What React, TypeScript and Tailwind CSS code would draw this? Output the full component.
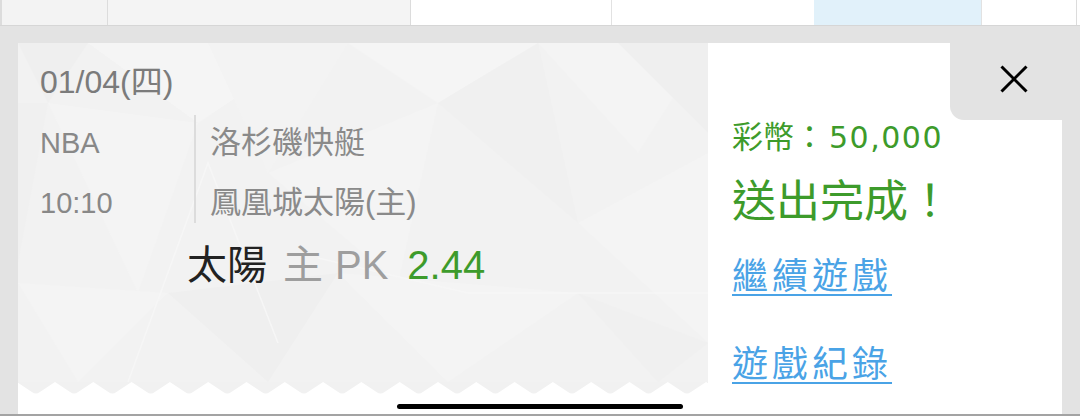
import React from "react";

function Texture() {
  return (
    <svg className="absolute inset-0 h-full w-full" viewBox="0 0 690 339" preserveAspectRatio="none">
      <rect width="690" height="339" fill="#f2f2f2" />
      <polygon points="0,0 70,0 30,60" fill="#efefef" />
      <polygon points="70,0 300,0 180,80" fill="#f5f5f5" />
      <polygon points="190,0 330,0 250,130" fill="#f3f3f3" />
      <polygon points="330,0 520,0 420,60" fill="#f5f5f5" />
      <polygon points="420,60 520,0 560,180" fill="#f0f0f0" />
      <polygon points="520,0 690,0 620,110" fill="#f4f4f4" />
      <polygon points="600,0 690,0 690,90" fill="#efefef" />
      <polygon points="0,60 30,60 0,220" fill="#f0f0f0" />
      <polygon points="30,60 180,80 120,250" fill="#f4f4f4" />
      <polygon points="250,130 420,60 380,240" fill="#f4f4f4" />
      <polygon points="560,180 690,110 690,300" fill="#f4f4f4" />
      <polygon points="0,240 150,250 60,339" fill="#f4f4f4" />
      <polygon points="150,250 320,230 250,339" fill="#efefef" />
      <polygon points="320,230 560,250 430,339" fill="#f4f4f4" />
      <polygon points="560,250 690,300 640,339" fill="#f0f0f0" />
      <polyline points="110,339 190,120 260,300" fill="none" stroke="#f6f6f6" strokeWidth="1.5" />
      <polyline points="300,215 450,250 700,250" fill="none" stroke="#f6f6f6" strokeWidth="1.5" />
    </svg>
  );
}

function Zigzag() {
  const P = 38.3;
  const parts: string[] = [];
  for (let k = -2; k < 19; k++) {
    const p = 37 + k * P;
    const v = p + P / 2;
    parts.push(
      `M${p.toFixed(1)},0 L${(v - 4).toFixed(1)},10 Q${v.toFixed(1)},13 ${(v + 4).toFixed(1)},10 L${(p + P).toFixed(1)},0 Z`
    );
  }
  return (
    <svg className="block h-[12px] w-[690px]" viewBox="0 0 690 12">
      <rect width="690" height="12" fill="#ffffff" />
      <path d={parts.join(" ")} fill="#f1f1f1" />
    </svg>
  );
}

export default function App() {
  return (
    <div className="relative h-[416px] w-[1080px] overflow-hidden bg-[#e3e3e3] font-['Liberation_Sans','Noto_Sans_CJK_TC',sans-serif]">
      {/* table strip behind the overlay */}
      <div className="flex h-[26px] border-b border-[#d6d6d6] bg-white">
        <div className="w-[108px] border-r border-l-2 border-[#dcdcdc] bg-[#f3f3f3]" />
        <div className="w-[303px] border-r border-[#dcdcdc] bg-[#f4f4f4]" />
        <div className="w-[201px] border-r border-[#e2e2e2]" />
        <div className="w-[202px]" />
        <div className="w-[168px] border-r border-[#e2e2e2] bg-[#e1f1fa]" />
        <div className="w-[95px] border-r border-[#dcdcdc]" />
      </div>

      {/* overlay area */}
      <div className="flex h-[388px] px-[18px] pt-[17px]">
        <div className="flex flex-1">
          {/* ticket */}
          <div className="flex w-[690px] flex-col bg-white">
            <div className="relative flex-1">
              <Texture />
              <div className="relative pl-[22px] pt-[19px]">
                <div className="text-[32px] leading-[40px] text-[#7b7b7b]">01/04(四)</div>
                <div className="mt-[13px] flex">
                  <div className="w-[154px] pt-[8px] text-[29px] leading-[40px] text-[#888888]">
                    <div>NBA</div>
                    <div className="mt-[20px]">10:10</div>
                  </div>
                  <div className="h-[108px] w-[2px] bg-[#dcdcdc]" />
                  <div className="pl-[14px] pt-[8px] text-[31px] leading-[40px] text-[#8a8a8a]">
                    <div>洛杉磯快艇</div>
                    <div className="mt-[20px]">鳳凰城太陽(主)</div>
                  </div>
                </div>
                <div className="mt-[18px] flex pl-[147px] text-[40px] leading-[48px]">
                  <span className="text-[#222222]">太陽</span>
                  <span className="ml-[16px] text-[#9e9e9e]">主</span>
                  <span className="ml-[12px] text-[#9e9e9e]">PK</span>
                  <span className="ml-[19px] text-[#3d9b2b]">2.44</span>
                </div>
              </div>
            </div>
            <Zigzag />
            <div className="h-[20px] bg-white" />
          </div>

          {/* result panel */}
          <div className="flex flex-1 flex-col bg-white">
            <div className="flex justify-end">
              <div className="flex h-[77px] w-[112px] items-center justify-center rounded-bl-[14px] bg-[#e3e3e3] pb-[5px] pl-[16px]">
                <svg width="28" height="28" viewBox="0 0 28 28">
                  <line x1="1.5" y1="1.5" x2="26.5" y2="26.5" stroke="#000" strokeWidth="3" />
                  <line x1="26.5" y1="1.5" x2="1.5" y2="26.5" stroke="#000" strokeWidth="3" />
                </svg>
              </div>
            </div>
            <div className="pl-[24px] text-[#3d9b2b]">
              <div className="text-[31px] leading-[36px]">
                彩幣：<span className="ml-[4px] font-['DejaVu_Sans'] text-[30px] tracking-[1.5px]">50,000</span>
              </div>
              <div className="mt-[20px] text-[44px] leading-[52px]">送出完成！</div>
              <div className="mt-[25px] text-[36px] leading-[48px]">
                <a className="tracking-[4px] text-[#4aa3e6] underline decoration-2 underline-offset-[5px]">繼續遊戲</a>
              </div>
              <div className="mt-[40px] text-[36px] leading-[48px]">
                <a className="tracking-[4px] text-[#4aa3e6] underline decoration-2 underline-offset-[5px]">遊戲紀錄</a>
              </div>
            </div>
          </div>
        </div>
      </div>
      <div className="h-[2px] bg-[#a3a3a3]" />

      {/* home indicator */}
      <div className="absolute left-[397px] top-[404px] h-[5px] w-[286px] rounded-full bg-black" />
    </div>
  );
}
